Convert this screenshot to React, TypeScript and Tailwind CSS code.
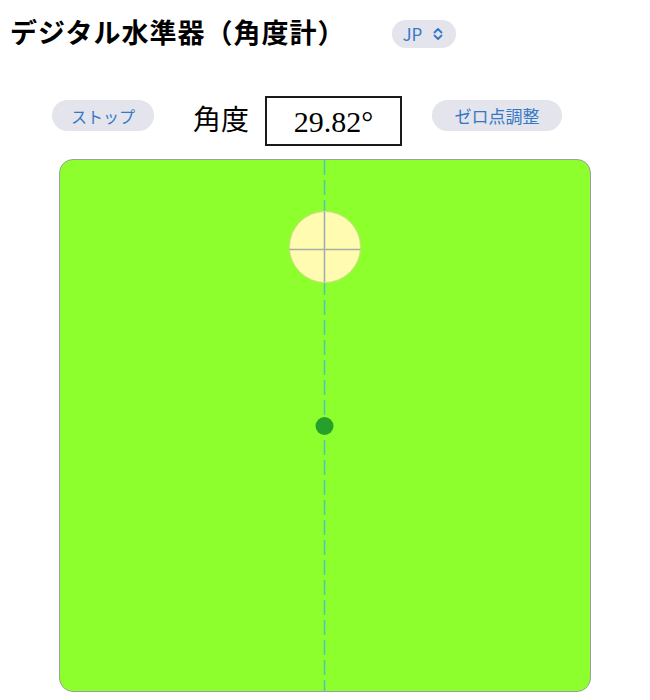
import React, { useState } from 'react';

const App: React.FC = () => {
  const [running, setRunning] = useState(true);
  const angle = 29.82;

  return (
    <div className="w-[650px] h-[700px] bg-white overflow-hidden">
      {/* header */}
      <div className="flex items-center pl-[10px] pt-[14px] h-[54px]">
        <h1 className="text-[27px] font-bold leading-[40px] text-black tracking-[1px] font-['Liberation_Serif','Noto_Sans_CJK_JP',serif]">
          デジタル水準器（角度計）
        </h1>
        <button
          type="button"
          className="ml-[47px] flex items-center h-[28px] w-[64px] pl-[10px] rounded-full bg-[#e3e4ec] text-[#3478c6] text-[17px] font-['Noto_Sans_CJK_JP','Liberation_Sans',sans-serif]"
        >
          <span>JP</span>
          <svg width="14" height="14" viewBox="0 0 14 14" className="ml-[9px]" fill="none" stroke="#3478c6" strokeWidth="1.8" strokeLinecap="round" strokeLinejoin="round">
            <path d="M3.5 5.5 L7 2 L10.5 5.5" />
            <path d="M3.5 8.5 L7 12 L10.5 8.5" />
          </svg>
        </button>
      </div>

      {/* controls */}
      <div className="flex items-start pl-[52px] mt-[42px] h-[50px] font-['Noto_Sans_CJK_JP','Liberation_Sans',sans-serif]">
        <button
          type="button"
          onClick={() => setRunning(!running)}
          className="mt-[4px] h-[31px] w-[102px] rounded-full bg-[#e3e4ec] text-[#3478c6] text-[16px] flex items-center justify-center"
        >
          {running ? 'ストップ' : 'スタート'}
        </button>
        <span className="ml-[39px] mt-[7px] text-[28px] leading-[36px] text-black font-['Liberation_Serif','Noto_Sans_CJK_JP',serif]">
          角度
        </span>
        <div className="ml-[16px] w-[137px] h-[50px] border-2 border-[#1a1a1a] flex items-center justify-center text-[30px] text-black font-['Liberation_Serif',serif]">
          {angle.toFixed(2)}°
        </div>
        <button
          type="button"
          className="ml-[30px] mt-[4px] h-[31px] w-[130px] rounded-full bg-[#e3e4ec] text-[#3478c6] text-[17px] flex items-center justify-center"
        >
          ゼロ点調整
        </button>
      </div>

      {/* level */}
      <div className="mt-[13px] mx-auto w-[532px] h-[533px] rounded-[14px] border border-[#9aa0a0] bg-[#8cff2c] overflow-hidden">
        <svg width="530" height="531" viewBox="0 0 530 531">
          <line x1="264.5" y1="0" x2="264.5" y2="531" stroke="#4fc3c0" strokeWidth="1.5" strokeDasharray="15 5" />
          <circle cx="265" cy="87" r="35.5" fill="#fffbb0" stroke="#d8d890" strokeWidth="1" />
          <line x1="229.5" y1="89.5" x2="300.5" y2="89.5" stroke="#a8aea0" strokeWidth="1.5" />
          <line x1="264.5" y1="52" x2="264.5" y2="122" stroke="#a0a8b8" strokeWidth="1.5" />
          <circle cx="264.5" cy="266" r="9" fill="#279f2c" />
        </svg>
      </div>
    </div>
  );
};

export default App;
